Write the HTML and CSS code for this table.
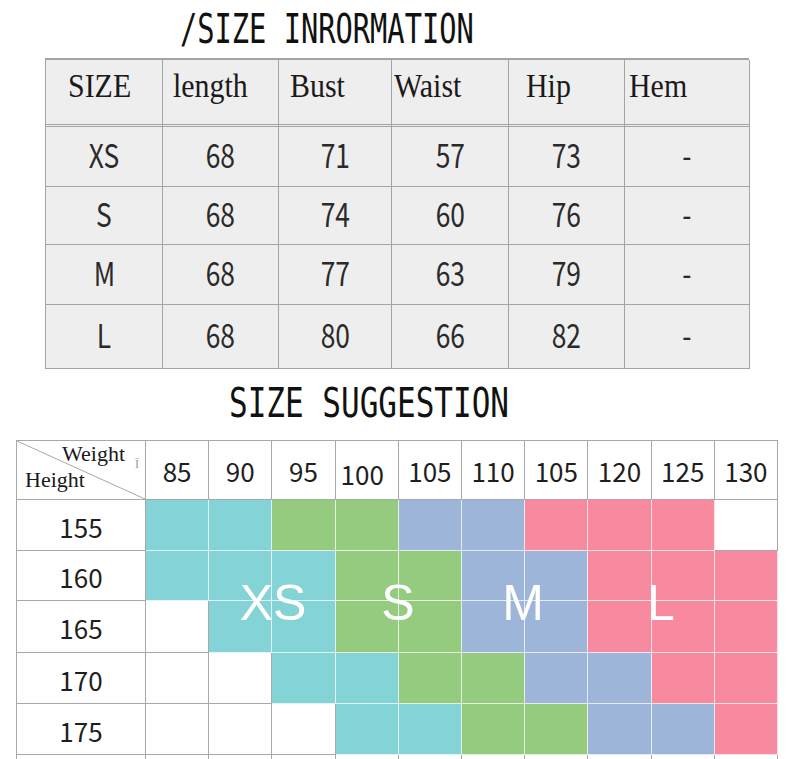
FILE: index.html
```html
<!DOCTYPE html>
<html>
<head>
<meta charset="utf-8">
<link rel="stylesheet" href="styles.css">
</head>
<body>
<div class="title title-info"><span class="title-text">/SIZE INRORMATION</span></div>
<div class="info">
  <div class="ih"><span>SIZE</span></div>
  <div class="ih"><span>length</span></div>
  <div class="ih"><span>Bust</span></div>
  <div class="ih"><span>Waist</span></div>
  <div class="ih"><span>Hip</span></div>
  <div class="ih"><span>Hem</span></div>

  <div class="ic"><span>XS</span></div><div class="ic"><span>68</span></div><div class="ic"><span>71</span></div><div class="ic"><span>57</span></div><div class="ic"><span>73</span></div><div class="ic"><span>-</span></div>
  <div class="ic"><span>S</span></div><div class="ic"><span>68</span></div><div class="ic"><span>74</span></div><div class="ic"><span>60</span></div><div class="ic"><span>76</span></div><div class="ic"><span>-</span></div>
  <div class="ic"><span>M</span></div><div class="ic"><span>68</span></div><div class="ic"><span>77</span></div><div class="ic"><span>63</span></div><div class="ic"><span>79</span></div><div class="ic"><span>-</span></div>
  <div class="ic"><span>L</span></div><div class="ic"><span>68</span></div><div class="ic"><span>80</span></div><div class="ic"><span>66</span></div><div class="ic"><span>82</span></div><div class="ic"><span>-</span></div>
</div>

<div class="title title-sugg"><span class="title-text">SIZE SUGGESTION</span></div>
<div class="sugg">
  <div class="corner">
    <svg class="diag" viewBox="0 0 100 100" preserveAspectRatio="none"><line x1="0" y1="0" x2="100" y2="100" stroke="#a8a8a8" stroke-width="1" vector-effect="non-scaling-stroke"/></svg>
    <span class="c-weight">Weight</span>
    <span class="c-mark">Ī</span>
    <span class="c-height">Height</span>
  </div>
  <div class="sh">85</div><div class="sh">90</div><div class="sh">95</div><div class="sh low">100</div><div class="sh">105</div><div class="sh">110</div><div class="sh">105</div><div class="sh">120</div><div class="sh">125</div><div class="sh">130</div>

  <div class="rl">155</div><div class="c t"></div><div class="c t"></div><div class="c g"></div><div class="c g"></div><div class="c b"></div><div class="c b"></div><div class="c p"></div><div class="c p"></div><div class="c p"></div><div class="c w"></div>
  <div class="rl">160</div><div class="c t"></div><div class="c t"></div><div class="c t"></div><div class="c g"></div><div class="c g"></div><div class="c b"></div><div class="c b"></div><div class="c p"></div><div class="c p"></div><div class="c p"></div>
  <div class="rl">165</div><div class="c w"></div><div class="c t"></div><div class="c t"></div><div class="c g"></div><div class="c g"></div><div class="c b"></div><div class="c b"></div><div class="c p"></div><div class="c p"></div><div class="c p"></div>
  <div class="rl">170</div><div class="c w"></div><div class="c w"></div><div class="c t"></div><div class="c t"></div><div class="c g"></div><div class="c g"></div><div class="c b"></div><div class="c b"></div><div class="c p"></div><div class="c p"></div>
  <div class="rl">175</div><div class="c w"></div><div class="c w"></div><div class="c w"></div><div class="c t"></div><div class="c t"></div><div class="c g"></div><div class="c g"></div><div class="c b"></div><div class="c b"></div><div class="c p"></div>

  <div class="c w"></div><div class="c w"></div><div class="c w"></div><div class="c w"></div><div class="c w"></div><div class="c w"></div><div class="c w"></div><div class="c w"></div><div class="c w"></div><div class="c w"></div><div class="c w"></div>

  <span class="lbl lbl-xs">XS</span>
  <span class="lbl lbl-s">S</span>
  <span class="lbl lbl-m">M</span>
  <span class="lbl lbl-l">L</span>
</div>
</body>
</html>
```

FILE: styles.css
```css
html, body {
  margin: 0;
  padding: 0;
  background: #ffffff;
  overflow: hidden;
}
body {
  width: 800px;
  height: 759px;
  color: #1e1e1e;
}

/* titles */
.title {
  font-family: "DejaVu Sans Mono", "Liberation Mono", monospace;
  color: #111;
  white-space: nowrap;
}
.title-text {
  display: inline-block;
  transform-origin: left center;
}
.title-info {
  height: 58px;
  line-height: 58px;
  font-size: 41px;
  padding-left: 180px;
}
.title-info .title-text {
  transform: scaleX(0.70);
}
.title-sugg {
  height: 71px;
  line-height: 68px;
  font-size: 40px;
  padding-left: 229px;
}
.title-sugg .title-text {
  transform: scaleX(0.775);
}

/* size information table */
.info {
  margin-left: 45px;
  width: 704px;
  display: grid;
  grid-template-columns: 117px 116px 113px 117px 116px 125px;
  grid-template-rows: 67px 60px 58px 60px 64px;
  border-left: 1px solid #a4a4a4;
  border-top: 2px solid #a4a4a4;
  box-sizing: border-box;
}
.ih, .ic {
  border-right: 1px solid #a4a4a4;
  border-bottom: 1px solid #a4a4a4;
  background: #efeeee;
  box-sizing: border-box;
}
.ih {
  border-bottom: 3px double #a4a4a4;
  font-family: "Liberation Serif", "DejaVu Serif", serif;
  font-size: 34px;
  line-height: 34px;
  padding-top: 9px;
  color: #1a1a1a;
}
.ih span {
  display: inline-block;
  transform: scaleX(0.88);
  transform-origin: left center;
}
.ih:nth-child(1) { padding-left: 22px; }
.ih:nth-child(2) { padding-left: 10px; }
.ih:nth-child(3) { padding-left: 11px; }
.ih:nth-child(4) { padding-left: 2px; }
.ih:nth-child(5) { padding-left: 17px; }
.ih:nth-child(6) { padding-left: 4px; }

.ic {
  display: flex;
  align-items: center;
  justify-content: center;
  padding-bottom: 6px;
  font-family: "Noto Sans CJK SC", "Noto Sans", sans-serif;
  font-size: 33px;
  color: #2a2a2a;
}
.ic span {
  display: inline-block;
  transform: scaleX(0.8);
}

/* size suggestion table */
.sugg {
  position: relative;
  margin-left: 16px;
  width: 762px;
  display: grid;
  grid-template-columns: 129px repeat(10, 1fr);
  grid-template-rows: 59px 51px 50px 52px 51px 51px 12px;
  border-left: 1px solid #a8a8a8;
  border-top: 1px solid #a8a8a8;
  box-sizing: border-box;
}
.sugg > div {
  border-right: 1px solid #a8a8a8;
  border-bottom: 1px solid #a8a8a8;
  box-sizing: border-box;
}
.corner {
  position: relative;
  font-family: "Liberation Serif", "DejaVu Serif", serif;
  font-size: 22px;
  color: #1a1a1a;
}
.diag {
  position: absolute;
  left: 0;
  top: 0;
  width: 100%;
  height: 100%;
}
.c-weight {
  position: absolute;
  left: 45px;
  top: 0px;
}
.c-height {
  position: absolute;
  left: 8px;
  top: 26px;
}
.c-mark {
  position: absolute;
  left: 118px;
  top: 16px;
  font-size: 12px;
  color: #9a9a9a;
}
.sh, .rl {
  display: flex;
  align-items: center;
  justify-content: center;
  font-family: "Noto Sans CJK SC", "Noto Sans", sans-serif;
  font-size: 26px;
  color: #1e1e1e;
}
.sh.low {
  padding-top: 7px;
  justify-content: flex-start;
  padding-left: 5px;
}
.rl {
  padding-top: 2px;
}
.c.t { background: #84d3d6; border-color: rgba(255,255,255,0.75); }
.c.g { background: #95cb7f; border-color: rgba(255,255,255,0.75); }
.c.b { background: #9db5d9; border-color: rgba(255,255,255,0.75); }
.c.p { background: #f88aa0; border-color: rgba(255,255,255,0.75); }
.c.w { background: #ffffff; }

.lbl {
  position: absolute;
  top: 137px;
  font-family: "Liberation Sans", Arial, sans-serif;
  font-size: 50px;
  line-height: 50px;
  color: #ffffff;
  transform: translateX(-50%);
}
.lbl-xs { left: 256px; }
.lbl-s { left: 381px; }
.lbl-m { left: 506px; }
.lbl-l { left: 644px; }
```
